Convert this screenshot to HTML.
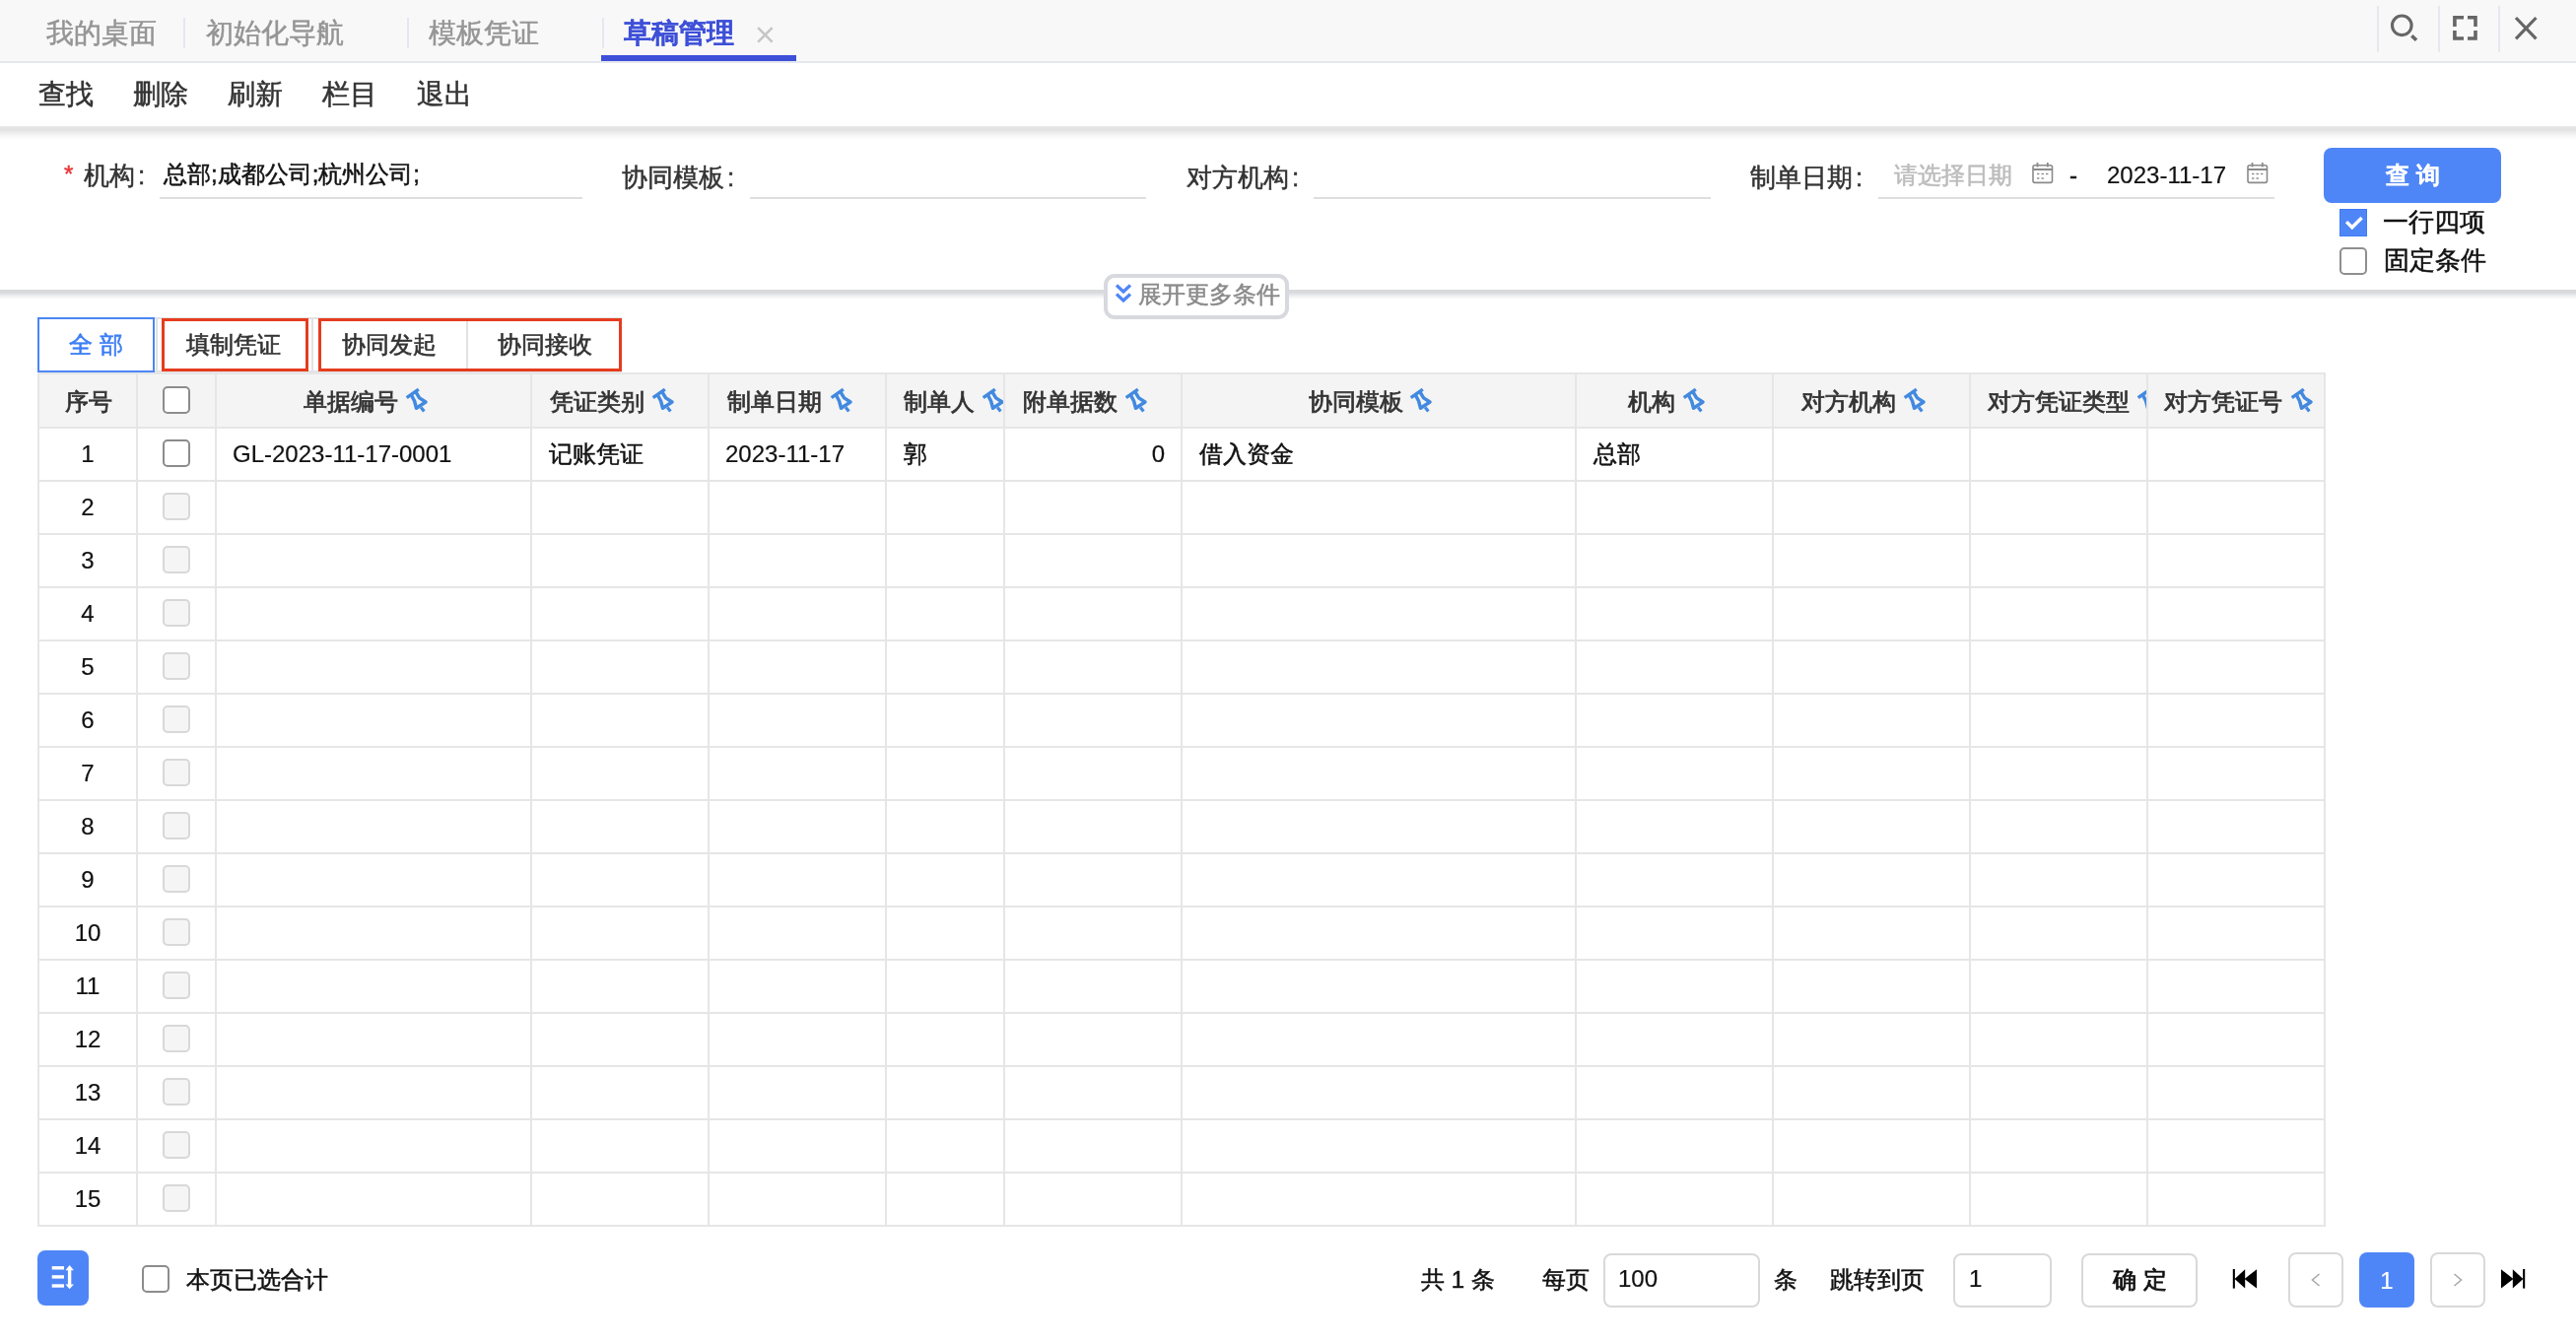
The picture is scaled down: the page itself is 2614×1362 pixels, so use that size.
<!DOCTYPE html>
<html><head><meta charset="utf-8"><title>草稿管理</title>
<style>
*{box-sizing:border-box;margin:0;padding:0}
html,body{width:2614px;height:1362px;overflow:hidden;background:#fff;font-family:"Liberation Sans",sans-serif;color:#333}
body{will-change:transform}
.a{-webkit-text-stroke:0.5px currentColor}
.a[style*="bold"]{-webkit-text-stroke:0.15px currentColor}
.n{-webkit-text-stroke:0.2px currentColor}
.a{position:absolute;white-space:nowrap}
.t28{font-size:28px;line-height:28px}
.t26{font-size:26px;line-height:26px}
.t24{font-size:24px;line-height:24px}
.box{position:absolute}
svg{position:absolute;overflow:visible}
</style></head><body>

<!-- ========== TAB BAR ========== -->
<div class="box" style="left:0;top:0;width:2614px;height:62px;background:#f8f8f8"></div>
<div class="box" style="left:0;top:62px;width:2614px;height:2px;background:#e6e8ef"></div>
<div class="a t28" style="left:47px;top:20px;color:#959595">我的桌面</div>
<div class="box" style="left:186px;top:18px;width:2px;height:31px;background:#e6e8f0"></div>
<div class="a t28" style="left:209px;top:20px;color:#959595">初始化导航</div>
<div class="box" style="left:413px;top:18px;width:2px;height:31px;background:#e6e8f0"></div>
<div class="a t28" style="left:435px;top:20px;color:#959595">模板凭证</div>
<div class="box" style="left:611px;top:18px;width:2px;height:31px;background:#e6e8f0"></div>
<div class="a t28" style="left:633px;top:20px;color:#3e50d8;font-weight:bold">草稿管理</div>
<svg style="left:768px;top:27px" width="17" height="17" viewBox="0 0 17 17"><path d="M1.2 1.2L15.6 15.6M15.6 1.2L1.2 15.6" stroke="#c6c6c6" stroke-width="2.6"/></svg>
<div class="box" style="left:610px;top:56px;width:198px;height:6px;background:#3e50d8"></div>

<div class="box" style="left:2412px;top:6px;width:2px;height:47px;background:#e6e8f0"></div>
<div class="box" style="left:2474px;top:6px;width:2px;height:47px;background:#e6e8f0"></div>
<div class="box" style="left:2535px;top:6px;width:2px;height:47px;background:#e6e8f0"></div>
<svg style="left:2420px;top:8px" width="40" height="40" viewBox="0 0 40 40"><circle cx="17.3" cy="17.8" r="9.8" fill="none" stroke="#666" stroke-width="3.1"/><path d="M27.3 28.2L32 32.8" stroke="#666" stroke-width="3.6"/></svg>
<svg style="left:2482px;top:8px" width="40" height="40" viewBox="0 0 40 40"><path d="M8.9 19V9.8H18M22 9.8H30V19M30 23V31H22M18 31H8.9V23" fill="none" stroke="#666" stroke-width="3.6"/></svg>
<svg style="left:2544px;top:10px" width="40" height="40" viewBox="0 0 40 40"><path d="M9 8L29.5 29.3M29.5 8L9 29.3" stroke="#666" stroke-width="3.2"/></svg>

<!-- ========== TOOLBAR ========== -->
<div class="box" style="left:0;top:128px;width:2614px;height:14px;background:linear-gradient(#e9e9e9,#e2e2e2 25%,#f6f6f6 70%,#fff)"></div>
<div class="a t28" style="left:39px;top:82px;color:#333">查找</div>
<div class="a t28" style="left:135px;top:82px;color:#333">删除</div>
<div class="a t28" style="left:231px;top:82px;color:#333">刷新</div>
<div class="a t28" style="left:327px;top:82px;color:#333">栏目</div>
<div class="a t28" style="left:423px;top:82px;color:#333">退出</div>

<!-- ========== SEARCH PANEL ========== -->
<div class="a t24" style="left:65px;top:165px;color:#e8383b">*</div>
<div class="a t26" style="left:85px;top:165px;color:#333">机构<span style="margin-left:3px">:</span></div>
<div class="a t24" style="left:166px;top:165px;color:#111">总部;成都公司;杭州公司;</div>
<div class="box" style="left:162px;top:200px;width:429px;height:2px;background:#dedede"></div>

<div class="a t26" style="left:631px;top:167px;color:#333">协同模板<span style="margin-left:3px">:</span></div>
<div class="box" style="left:761px;top:200px;width:402px;height:2px;background:#dedede"></div>

<div class="a t26" style="left:1204px;top:167px;color:#333">对方机构<span style="margin-left:3px">:</span></div>
<div class="box" style="left:1333px;top:200px;width:403px;height:2px;background:#dedede"></div>

<div class="a t26" style="left:1776px;top:167px;color:#333">制单日期<span style="margin-left:3px">:</span></div>
<div class="box" style="left:1906px;top:200px;width:402px;height:2px;background:#dedede"></div>
<div class="a t24" style="left:1922px;top:166px;color:#bcbcbc">请选择日期</div>
<svg style="left:2056px;top:160px" width="34" height="34" viewBox="0 0 34 34"><g fill="none" stroke="#8a8a8a"><rect x="7" y="7.8" width="19.5" height="17.6" rx="1.8" stroke-width="1.6"/><path d="M7 12H26.5" stroke-width="2"/><path d="M11.5 5V9.5M21.8 5V9.5" stroke-width="1.8"/></g><g fill="#8a8a8a"><rect x="11" y="15.8" width="2.4" height="1.4"/><rect x="15.5" y="15.8" width="2.4" height="1.4"/><rect x="20" y="15.8" width="2.4" height="1.4"/><rect x="11" y="20.3" width="2.4" height="1.4"/><rect x="15.5" y="20.3" width="2.4" height="1.4"/></g></svg>
<div class="a t24" style="left:2100px;top:166px;color:#111">-</div>
<div class="a t24 n" style="left:2138px;top:166px;color:#111">2023-11-17</div>
<svg style="left:2274px;top:160px" width="34" height="34" viewBox="0 0 34 34"><g fill="none" stroke="#8a8a8a"><rect x="7" y="7.8" width="19.5" height="17.6" rx="1.8" stroke-width="1.6"/><path d="M7 12H26.5" stroke-width="2"/><path d="M11.5 5V9.5M21.8 5V9.5" stroke-width="1.8"/></g><g fill="#8a8a8a"><rect x="11" y="15.8" width="2.4" height="1.4"/><rect x="15.5" y="15.8" width="2.4" height="1.4"/><rect x="20" y="15.8" width="2.4" height="1.4"/><rect x="11" y="20.3" width="2.4" height="1.4"/><rect x="15.5" y="20.3" width="2.4" height="1.4"/></g></svg>

<div class="box" style="left:2358px;top:150px;width:180px;height:56px;background:#4f86f7;border-radius:8px"></div>
<div class="a t24" style="left:2421px;top:166px;color:#fff;font-weight:bold">查 询</div>

<div class="box" style="left:2374px;top:212px;width:28px;height:28px;background:#4f86f7;border:1px solid #3f7bf5"></div>
<svg style="left:2368px;top:206px" width="40" height="40" viewBox="0 0 40 40"><path d="M13.1 19.1L18.8 24.8L28.6 15" fill="none" stroke="#fff" stroke-width="3.4"/></svg>
<div class="a t26" style="left:2418px;top:212px;color:#111">一行四项</div>
<div class="box" style="left:2374px;top:251px;width:28px;height:28px;background:#fff;border:2px solid #8f8f8f;border-radius:5px"></div>
<div class="a t26" style="left:2419px;top:251px;color:#111">固定条件</div>

<!-- panel bottom -->
<div class="box" style="left:0;top:294px;width:2614px;height:10px;background:linear-gradient(#dadada,#d9dadf 30%,#e9eaed 55%,#f8f8f8 80%,#fff)"></div>
<div class="box" style="left:1120px;top:278px;width:188px;height:46px;background:#fff;border:4px solid #d8d9de;border-radius:11px"></div>
<svg style="left:1128px;top:284px" width="24" height="28" viewBox="0 0 24 28"><path d="M5 5.5L12 12L19 5.5M5 14.5L12 21L19 14.5" fill="none" stroke="#4f86f7" stroke-width="3.2"/></svg>
<div class="a t24" style="left:1155px;top:287px;color:#8a8a8a">展开更多条件</div>

<!-- ##GEN START## -->
<!-- ========== FILTER TABS ========== -->
<div class="box" style="left:38px;top:322px;width:593px;height:56px;border:2px solid #e2e2e2;background:#fff"></div>
<div class="box" style="left:158px;top:322px;width:2px;height:56px;background:#e2e2e2"></div>
<div class="box" style="left:316px;top:322px;width:2px;height:56px;background:#e2e2e2"></div>
<div class="box" style="left:473px;top:322px;width:2px;height:56px;background:#e2e2e2"></div>
<div class="box" style="left:38px;top:322px;width:119px;height:56px;border:2px solid #4a86f7"></div>
<div class="a t24" style="left:70px;top:338px;color:#3d7ef5;-webkit-text-stroke:0.6px #3d7ef5">全 部</div>
<div class="a t24" style="left:189px;top:338px;color:#333;-webkit-text-stroke:0.6px #333">填制凭证</div>
<div class="a t24" style="left:347px;top:338px;color:#333;-webkit-text-stroke:0.6px #333">协同发起</div>
<div class="a t24" style="left:505px;top:338px;color:#333;-webkit-text-stroke:0.6px #333">协同接收</div>
<div class="box" style="left:164px;top:323px;width:149px;height:54px;border:3px solid #e63c1e"></div>
<div class="box" style="left:323px;top:323px;width:308px;height:54px;border:3px solid #e63c1e"></div>
<!-- ========== TABLE ========== -->
<div class="box" style="left:40px;top:380px;width:2318px;height:53px;background:#f4f4f4"></div>
<div class="box" style="left:38px;top:378px;width:2322px;height:2px;background:#e6e6e6"></div>
<div class="box" style="left:38px;top:433px;width:2322px;height:2px;background:#e6e6e6"></div>
<div class="box" style="left:38px;top:487px;width:2322px;height:2px;background:#e6e6e6"></div>
<div class="box" style="left:38px;top:541px;width:2322px;height:2px;background:#e6e6e6"></div>
<div class="box" style="left:38px;top:595px;width:2322px;height:2px;background:#e6e6e6"></div>
<div class="box" style="left:38px;top:649px;width:2322px;height:2px;background:#e6e6e6"></div>
<div class="box" style="left:38px;top:703px;width:2322px;height:2px;background:#e6e6e6"></div>
<div class="box" style="left:38px;top:757px;width:2322px;height:2px;background:#e6e6e6"></div>
<div class="box" style="left:38px;top:811px;width:2322px;height:2px;background:#e6e6e6"></div>
<div class="box" style="left:38px;top:865px;width:2322px;height:2px;background:#e6e6e6"></div>
<div class="box" style="left:38px;top:919px;width:2322px;height:2px;background:#e6e6e6"></div>
<div class="box" style="left:38px;top:973px;width:2322px;height:2px;background:#e6e6e6"></div>
<div class="box" style="left:38px;top:1027px;width:2322px;height:2px;background:#e6e6e6"></div>
<div class="box" style="left:38px;top:1081px;width:2322px;height:2px;background:#e6e6e6"></div>
<div class="box" style="left:38px;top:1135px;width:2322px;height:2px;background:#e6e6e6"></div>
<div class="box" style="left:38px;top:1189px;width:2322px;height:2px;background:#e6e6e6"></div>
<div class="box" style="left:38px;top:1243px;width:2322px;height:2px;background:#e6e6e6"></div>
<div class="box" style="left:38px;top:378px;width:2px;height:867px;background:#e6e6e6"></div>
<div class="box" style="left:138px;top:378px;width:2px;height:867px;background:#e6e6e6"></div>
<div class="box" style="left:218px;top:378px;width:2px;height:867px;background:#e6e6e6"></div>
<div class="box" style="left:538px;top:378px;width:2px;height:867px;background:#e6e6e6"></div>
<div class="box" style="left:718px;top:378px;width:2px;height:867px;background:#e6e6e6"></div>
<div class="box" style="left:898px;top:378px;width:2px;height:867px;background:#e6e6e6"></div>
<div class="box" style="left:1018px;top:378px;width:2px;height:867px;background:#e6e6e6"></div>
<div class="box" style="left:1198px;top:378px;width:2px;height:867px;background:#e6e6e6"></div>
<div class="box" style="left:1598px;top:378px;width:2px;height:867px;background:#e6e6e6"></div>
<div class="box" style="left:1798px;top:378px;width:2px;height:867px;background:#e6e6e6"></div>
<div class="box" style="left:1998px;top:378px;width:2px;height:867px;background:#e6e6e6"></div>
<div class="box" style="left:2178px;top:378px;width:2px;height:867px;background:#e6e6e6"></div>
<div class="box" style="left:2358px;top:378px;width:2px;height:867px;background:#e6e6e6"></div>
<div class="a t24" style="left:66px;top:396px;color:#333;-webkit-text-stroke:0.75px #333">序号</div>
<div class="a t24" style="left:308px;top:396px;color:#333;-webkit-text-stroke:0.75px #333">单据编号</div>
<svg style="left:405px;top:388px" width="36" height="36" viewBox="0 0 36 36"><g fill="none" stroke="#4289e0"><path d="M7.7 15.6L19.8 7.2" stroke-width="3.4"/><path d="M12.2 12.6L15.6 19L17.5 26.3L27 20L20.6 15.9L16.8 9.6" stroke-width="3.5" stroke-linejoin="round"/><path d="M22.2 25.6L25.4 29.6" stroke-width="3.2"/></g></svg>
<div class="a t24" style="left:558px;top:396px;color:#333;-webkit-text-stroke:0.75px #333">凭证类别</div>
<svg style="left:655px;top:388px" width="36" height="36" viewBox="0 0 36 36"><g fill="none" stroke="#4289e0"><path d="M7.7 15.6L19.8 7.2" stroke-width="3.4"/><path d="M12.2 12.6L15.6 19L17.5 26.3L27 20L20.6 15.9L16.8 9.6" stroke-width="3.5" stroke-linejoin="round"/><path d="M22.2 25.6L25.4 29.6" stroke-width="3.2"/></g></svg>
<div class="a t24" style="left:738px;top:396px;color:#333;-webkit-text-stroke:0.75px #333">制单日期</div>
<svg style="left:836px;top:388px" width="36" height="36" viewBox="0 0 36 36"><g fill="none" stroke="#4289e0"><path d="M7.7 15.6L19.8 7.2" stroke-width="3.4"/><path d="M12.2 12.6L15.6 19L17.5 26.3L27 20L20.6 15.9L16.8 9.6" stroke-width="3.5" stroke-linejoin="round"/><path d="M22.2 25.6L25.4 29.6" stroke-width="3.2"/></g></svg>
<div class="a t24" style="left:917px;top:396px;color:#333;-webkit-text-stroke:0.75px #333">制单人</div>
<div class="box" style="left:990px;top:388px;width:28px;height:36px;overflow:hidden"><svg style="left:0;top:0" width="36" height="36" viewBox="0 0 36 36"><g fill="none" stroke="#4289e0"><path d="M7.7 15.6L19.8 7.2" stroke-width="3.4"/><path d="M12.2 12.6L15.6 19L17.5 26.3L27 20L20.6 15.9L16.8 9.6" stroke-width="3.5" stroke-linejoin="round"/><path d="M22.2 25.6L25.4 29.6" stroke-width="3.2"/></g></svg></div>
<div class="a t24" style="left:1038px;top:396px;color:#333;-webkit-text-stroke:0.75px #333">附单据数</div>
<svg style="left:1135px;top:388px" width="36" height="36" viewBox="0 0 36 36"><g fill="none" stroke="#4289e0"><path d="M7.7 15.6L19.8 7.2" stroke-width="3.4"/><path d="M12.2 12.6L15.6 19L17.5 26.3L27 20L20.6 15.9L16.8 9.6" stroke-width="3.5" stroke-linejoin="round"/><path d="M22.2 25.6L25.4 29.6" stroke-width="3.2"/></g></svg>
<div class="a t24" style="left:1328px;top:396px;color:#333;-webkit-text-stroke:0.75px #333">协同模板</div>
<svg style="left:1424px;top:388px" width="36" height="36" viewBox="0 0 36 36"><g fill="none" stroke="#4289e0"><path d="M7.7 15.6L19.8 7.2" stroke-width="3.4"/><path d="M12.2 12.6L15.6 19L17.5 26.3L27 20L20.6 15.9L16.8 9.6" stroke-width="3.5" stroke-linejoin="round"/><path d="M22.2 25.6L25.4 29.6" stroke-width="3.2"/></g></svg>
<div class="a t24" style="left:1652px;top:396px;color:#333;-webkit-text-stroke:0.75px #333">机构</div>
<svg style="left:1701px;top:388px" width="36" height="36" viewBox="0 0 36 36"><g fill="none" stroke="#4289e0"><path d="M7.7 15.6L19.8 7.2" stroke-width="3.4"/><path d="M12.2 12.6L15.6 19L17.5 26.3L27 20L20.6 15.9L16.8 9.6" stroke-width="3.5" stroke-linejoin="round"/><path d="M22.2 25.6L25.4 29.6" stroke-width="3.2"/></g></svg>
<div class="a t24" style="left:1828px;top:396px;color:#333;-webkit-text-stroke:0.75px #333">对方机构</div>
<svg style="left:1925px;top:388px" width="36" height="36" viewBox="0 0 36 36"><g fill="none" stroke="#4289e0"><path d="M7.7 15.6L19.8 7.2" stroke-width="3.4"/><path d="M12.2 12.6L15.6 19L17.5 26.3L27 20L20.6 15.9L16.8 9.6" stroke-width="3.5" stroke-linejoin="round"/><path d="M22.2 25.6L25.4 29.6" stroke-width="3.2"/></g></svg>
<div class="a t24" style="left:2017px;top:396px;color:#333;-webkit-text-stroke:0.75px #333">对方凭证类型</div>
<div class="box" style="left:2162px;top:388px;width:16px;height:36px;overflow:hidden"><svg style="left:0;top:0" width="36" height="36" viewBox="0 0 36 36"><g fill="none" stroke="#4289e0"><path d="M7.7 15.6L19.8 7.2" stroke-width="3.4"/><path d="M12.2 12.6L15.6 19L17.5 26.3L27 20L20.6 15.9L16.8 9.6" stroke-width="3.5" stroke-linejoin="round"/><path d="M22.2 25.6L25.4 29.6" stroke-width="3.2"/></g></svg></div>
<div class="a t24" style="left:2196px;top:396px;color:#333;-webkit-text-stroke:0.75px #333">对方凭证号</div>
<svg style="left:2318px;top:388px" width="36" height="36" viewBox="0 0 36 36"><g fill="none" stroke="#4289e0"><path d="M7.7 15.6L19.8 7.2" stroke-width="3.4"/><path d="M12.2 12.6L15.6 19L17.5 26.3L27 20L20.6 15.9L16.8 9.6" stroke-width="3.5" stroke-linejoin="round"/><path d="M22.2 25.6L25.4 29.6" stroke-width="3.2"/></g></svg>
<div class="box" style="left:165px;top:392px;width:28px;height:28px;background:#fff;border:2px solid #8c8c8c;border-radius:5px"></div>
<div class="a t24 n" style="left:40px;width:98px;text-align:center;top:449px;color:#111">1</div>
<div class="box" style="left:165px;top:446px;width:28px;height:28px;background:#fff;border:2px solid #8c8c8c;border-radius:5px"></div>
<div class="a t24 n" style="left:40px;width:98px;text-align:center;top:503px;color:#111">2</div>
<div class="box" style="left:165px;top:500px;width:28px;height:28px;background:#f5f5f5;border:2px solid #d8d8d8;border-radius:5px"></div>
<div class="a t24 n" style="left:40px;width:98px;text-align:center;top:557px;color:#111">3</div>
<div class="box" style="left:165px;top:554px;width:28px;height:28px;background:#f5f5f5;border:2px solid #d8d8d8;border-radius:5px"></div>
<div class="a t24 n" style="left:40px;width:98px;text-align:center;top:611px;color:#111">4</div>
<div class="box" style="left:165px;top:608px;width:28px;height:28px;background:#f5f5f5;border:2px solid #d8d8d8;border-radius:5px"></div>
<div class="a t24 n" style="left:40px;width:98px;text-align:center;top:665px;color:#111">5</div>
<div class="box" style="left:165px;top:662px;width:28px;height:28px;background:#f5f5f5;border:2px solid #d8d8d8;border-radius:5px"></div>
<div class="a t24 n" style="left:40px;width:98px;text-align:center;top:719px;color:#111">6</div>
<div class="box" style="left:165px;top:716px;width:28px;height:28px;background:#f5f5f5;border:2px solid #d8d8d8;border-radius:5px"></div>
<div class="a t24 n" style="left:40px;width:98px;text-align:center;top:773px;color:#111">7</div>
<div class="box" style="left:165px;top:770px;width:28px;height:28px;background:#f5f5f5;border:2px solid #d8d8d8;border-radius:5px"></div>
<div class="a t24 n" style="left:40px;width:98px;text-align:center;top:827px;color:#111">8</div>
<div class="box" style="left:165px;top:824px;width:28px;height:28px;background:#f5f5f5;border:2px solid #d8d8d8;border-radius:5px"></div>
<div class="a t24 n" style="left:40px;width:98px;text-align:center;top:881px;color:#111">9</div>
<div class="box" style="left:165px;top:878px;width:28px;height:28px;background:#f5f5f5;border:2px solid #d8d8d8;border-radius:5px"></div>
<div class="a t24 n" style="left:40px;width:98px;text-align:center;top:935px;color:#111">10</div>
<div class="box" style="left:165px;top:932px;width:28px;height:28px;background:#f5f5f5;border:2px solid #d8d8d8;border-radius:5px"></div>
<div class="a t24 n" style="left:40px;width:98px;text-align:center;top:989px;color:#111">11</div>
<div class="box" style="left:165px;top:986px;width:28px;height:28px;background:#f5f5f5;border:2px solid #d8d8d8;border-radius:5px"></div>
<div class="a t24 n" style="left:40px;width:98px;text-align:center;top:1043px;color:#111">12</div>
<div class="box" style="left:165px;top:1040px;width:28px;height:28px;background:#f5f5f5;border:2px solid #d8d8d8;border-radius:5px"></div>
<div class="a t24 n" style="left:40px;width:98px;text-align:center;top:1097px;color:#111">13</div>
<div class="box" style="left:165px;top:1094px;width:28px;height:28px;background:#f5f5f5;border:2px solid #d8d8d8;border-radius:5px"></div>
<div class="a t24 n" style="left:40px;width:98px;text-align:center;top:1151px;color:#111">14</div>
<div class="box" style="left:165px;top:1148px;width:28px;height:28px;background:#f5f5f5;border:2px solid #d8d8d8;border-radius:5px"></div>
<div class="a t24 n" style="left:40px;width:98px;text-align:center;top:1205px;color:#111">15</div>
<div class="box" style="left:165px;top:1202px;width:28px;height:28px;background:#f5f5f5;border:2px solid #d8d8d8;border-radius:5px"></div>
<div class="a t24 n" style="left:236px;top:449px;color:#111">GL-2023-11-17-0001</div>
<div class="a t24" style="left:557px;top:449px;color:#111">记账凭证</div>
<div class="a t24 n" style="left:736px;top:449px;color:#111">2023-11-17</div>
<div class="a t24" style="left:917px;top:449px;color:#111">郭</div>
<div class="a t24 n" style="left:1100px;width:82px;text-align:right;top:449px;color:#111">0</div>
<div class="a t24" style="left:1217px;top:449px;color:#111">借入资金</div>
<div class="a t24" style="left:1617px;top:449px;color:#111">总部</div>
<!-- ========== FOOTER ========== -->
<div class="box" style="left:38px;top:1269px;width:52px;height:56px;background:#4f86f7;border-radius:8px"></div>
<svg style="left:30px;top:1262px" width="70" height="70" viewBox="0 0 70 70"><g fill="#fff"><rect x="22.7" y="23.1" width="12.3" height="3.4"/><rect x="22.7" y="32.2" width="12.3" height="3.4"/><rect x="22.7" y="41.3" width="12.3" height="3.4"/><rect x="38.9" y="26" width="3.4" height="17"/><path d="M36.5 27.2L40.6 21.9L44.9 27.2Z"/><path d="M36.5 41.4L40.6 46.2L44.9 41.4Z"/></g></svg>
<div class="box" style="left:144px;top:1284px;width:28px;height:28px;background:#fff;border:2px solid #8c8c8c;border-radius:5px"></div>
<div class="a t24" style="left:189px;top:1287px;color:#111">本页已选合计</div>
<div class="a t24" style="left:1442px;top:1287px;color:#111">共 1 条</div>
<div class="a t24" style="left:1565px;top:1287px;color:#111">每页</div>
<div class="box" style="left:1627px;top:1272px;width:159px;height:55px;border:2px solid #d9d9d9;border-radius:8px;background:#fff"></div>
<div class="a t24 n" style="left:1642px;top:1286px;color:#111">100</div>
<div class="a t24" style="left:1800px;top:1287px;color:#111">条</div>
<div class="a t24" style="left:1857px;top:1287px;color:#111">跳转到页</div>
<div class="box" style="left:1982px;top:1272px;width:100px;height:55px;border:2px solid #d9d9d9;border-radius:8px;background:#fff"></div>
<div class="a t24 n" style="left:1998px;top:1286px;color:#111">1</div>
<div class="box" style="left:2112px;top:1272px;width:118px;height:55px;border:2px solid #d9d9d9;border-radius:8px;background:#fff"></div>
<div class="a t24" style="left:2144px;top:1287px;color:#111;-webkit-text-stroke:0.75px #111">确 定</div>
<svg style="left:2260px;top:1280px" width="36" height="36" viewBox="0 0 36 36"><g fill="#000"><rect x="5.8" y="8" width="2.1" height="19.6"/><path d="M7.6 17.9L18.2 8.3V27.6Z"/><path d="M17.6 17.9L30 8.3V27.6Z"/></g></svg>
<div class="box" style="left:2322px;top:1271px;width:56px;height:56px;border:2px solid #d9d9d9;border-radius:8px;background:#fff"></div>
<svg style="left:2322px;top:1271px" width="56" height="56" viewBox="0 0 56 56"><path d="M31.5 22L24.5 28L31.5 34" fill="none" stroke="#aaa" stroke-width="1.6"/></svg>
<div class="box" style="left:2394px;top:1271px;width:56px;height:56px;border-radius:8px;background:#4f86f7"></div>
<div class="a t24 n" style="left:2394px;width:56px;text-align:center;top:1288px;color:#fff">1</div>
<div class="box" style="left:2466px;top:1271px;width:56px;height:56px;border:2px solid #d9d9d9;border-radius:8px;background:#fff"></div>
<svg style="left:2466px;top:1271px" width="56" height="56" viewBox="0 0 56 56"><path d="M24.5 22L31.5 28L24.5 34" fill="none" stroke="#aaa" stroke-width="1.6"/></svg>
<svg style="left:2532px;top:1280px" width="36" height="36" viewBox="0 0 36 36"><g fill="#000"><rect x="28.1" y="8" width="2.1" height="19.6"/><path d="M28.4 17.9L17.8 8.3V27.6Z"/><path d="M18.4 17.9L6 8.3V27.6Z"/></g></svg>
<!-- ##GEN END## -->
</body></html>
